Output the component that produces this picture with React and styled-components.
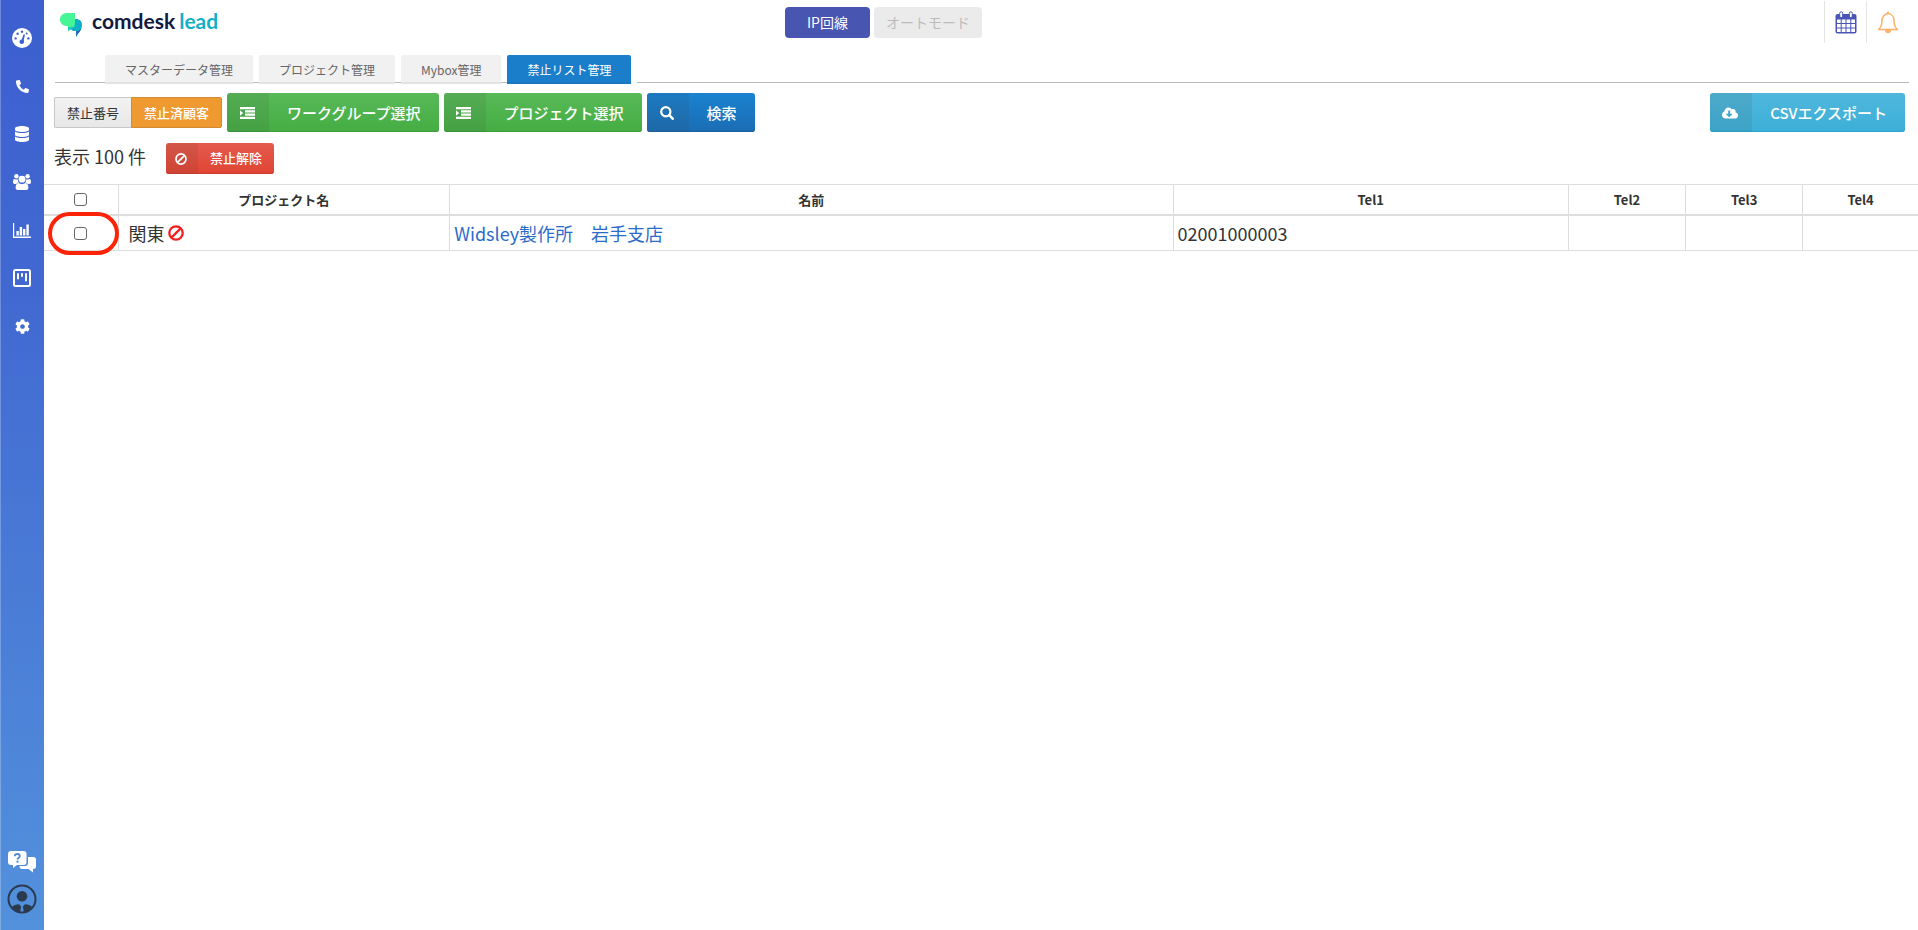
import React from 'react';
import styled, { createGlobalStyle, css } from 'styled-components';
import { FaDatabase, FaPhoneAlt, FaCog, FaCloudDownloadAlt } from 'react-icons/fa';

const GlobalStyle = createGlobalStyle`
  *, *::before, *::after { box-sizing: border-box; }
  body {
    margin: 0;
    background: #fff;
    color: #333;
    font-family: 'Noto Sans CJK JP', 'Noto Sans', sans-serif;
    font-size: 18px;
  }
  button { font-family: inherit; cursor: pointer; margin: 0; }
  svg { display: block; flex: none; }
`;

const Shell = styled.div`
  display: flex;
  min-height: 100vh;
`;

const Sidebar = styled.nav`
  flex: none;
  width: 44px;
  padding: 14px 0 16px;
  display: flex;
  flex-direction: column;
  justify-content: space-between;
  color: #fff;
  background: linear-gradient(#3d5fcf, #4168d1 30%, #5391dc);
  box-shadow: inset 1px 0 0 rgba(255, 255, 255, 0.25);
`;

const SideGroup = styled.div`
  display: flex;
  flex-direction: column;
  gap: ${(p) => p.$gap || 0}px;
`;

const SideLink = styled.a`
  height: ${(p) => (p.$small ? 30 : 48)}px;
  display: flex;
  align-items: center;
  justify-content: center;
  color: inherit;
`;

const Main = styled.div`
  flex: 1;
  min-width: 0;
`;

const Header = styled.header`
  height: 43px;
  display: flex;
  align-items: flex-start;
  padding-right: 10px;
`;

const LogoArea = styled.div`
  width: 39.75%;
  padding: 8px 0 0 16px;
`;

const Logo = styled.a`
  display: inline-flex;
  gap: 10px;
  text-decoration: none;
  font: 700 21px/25px Lato, sans-serif;
  color: #14193f;
`;

const LogoAccent = styled.span`
  color: #14b0c8;
  margin-left: 4px;
`;

const LogoMark = styled.svg`
  margin-top: 5px;
`;

const Modes = styled.div`
  display: flex;
  gap: 4px;
  padding-top: 7px;
`;

const ModeButton = styled.button`
  height: 31px;
  padding: 0 ${(p) => (p.$active ? 22 : 12)}px;
  border: 0;
  border-radius: 4px;
  font-size: 14px;
  line-height: 31px;
  color: ${(p) => (p.$active ? '#fff' : '#bcbcbc')};
  background: ${(p) => (p.$active ? '#4855b1' : '#ebebeb')};
`;

const HeaderIcons = styled.div`
  display: flex;
  margin: 1px 0 0 auto;
`;

const HeaderIcon = styled.button`
  width: 42px;
  height: 42px;
  padding: 0;
  display: flex;
  align-items: center;
  justify-content: center;
  background: none;
  border: 0;
  border-left: 1px solid #e4e4e4;
`;

const Tabs = styled.ul`
  list-style: none;
  margin: 12px 9px 0 11px;
  padding: 0 0 0 50px;
  height: 28px;
  display: flex;
  align-items: flex-start;
  border-bottom: 1px solid #b9b9b9;
`;

const TabItem = styled.li`
  height: 29px;
  padding-right: 6px;
  background: ${(p) => (p.$active ? '#fff' : 'none')};
`;

const TabLink = styled.a`
  display: block;
  height: 29px;
  padding: 0 20px;
  border-radius: 2px 2px 0 0;
  font-size: 12px;
  line-height: 29px;
  text-decoration: none;
  white-space: nowrap;
  color: ${(p) => (p.$active ? '#fff' : '#666')};
  background: ${(p) => (p.$active ? '#1a7ecb' : '#f1f1f1')};
  box-shadow: inset 0 -2px 0 ${(p) => (p.$active ? '#1a78c2' : '#e2e2e2')};
`;

const Toolbar = styled.div`
  display: flex;
  align-items: center;
  gap: 5px;
  padding: 10px 13px 0 10px;
`;

const Segmented = styled.div`
  display: flex;
`;

const Segment = styled.button`
  height: 31px;
  padding: 0 12px;
  border: 1px solid ${(p) => (p.$active ? '#cf8b35' : '#c8c8c8')};
  border-radius: ${(p) => (p.$active ? '0 2px 2px 0' : '2px 0 0 2px')};
  ${(p) => !p.$active && css`border-right: 0;`}
  font-size: 13px;
  line-height: 29px;
  font-weight: ${(p) => (p.$active ? 500 : 400)};
  color: ${(p) => (p.$active ? '#fff' : '#333')};
  background: ${(p) => (p.$active ? '#ee9a31' : 'linear-gradient(#f2f2f2, #e8e8e8)')};
`;

const tones = {
  green: ['#58b957', '#45ad43', '#3f9f3d'],
  blue: ['#1a82d0', '#1b6db3', '#1b62a3'],
  sky: ['#50b7dc', '#3cafd8', '#2aa5d0'],
  red: ['#e45b4c', '#e04433', '#d03b2b'],
};

const ActionButton = styled.button`
  display: flex;
  height: ${(p) => (p.$small ? 31 : 39)}px;
  padding: 0;
  border: 0;
  border-radius: 3px;
  overflow: hidden;
  white-space: nowrap;
  color: #fff;
  font-weight: 500;
  font-size: ${(p) => (p.$small ? 13 : 15)}px;
  line-height: ${(p) => (p.$small ? 30 : 39)}px;
  background: ${(p) => `linear-gradient(${tones[p.$tone][0]}, ${tones[p.$tone][1]})`};
  box-shadow: inset 0 -1px 0 ${(p) => tones[p.$tone][2]};
  margin-left: ${(p) => (p.$push ? 'auto' : 0)};
`;

const ActionIcon = styled.span`
  width: ${(p) => (p.$small ? 32 : 42)}px;
  padding-right: 2px;
  align-self: stretch;
  display: flex;
  align-items: center;
  justify-content: center;
  background: rgba(60, 60, 60, 0.1);
`;

const ActionLabel = styled.span`
  padding: 0 ${(p) => (p.$small ? 12 : 18)}px;
`;

const CountRow = styled.div`
  display: flex;
  align-items: flex-start;
  gap: 20px;
  padding: 11px 10px 10px;
`;

const Count = styled.p`
  margin: 0;
  line-height: 27px;
`;

const TableFrame = styled.div`
  border-top: 1px solid #ddd;
  border-bottom: 1px solid #ddd;
`;

const Table = styled.table`
  width: 100%;
  table-layout: fixed;
  border-collapse: collapse;
  border-style: hidden;
`;

const Col = styled.col`
  width: ${(p) => p.$width};
`;

const Th = styled.th`
  height: 30px;
  padding: 0;
  border: 1px solid #ddd;
  border-bottom-width: 2px;
  font-size: 13px;
  line-height: 20px;
  font-weight: 700;
`;

const Td = styled.td`
  height: 35px;
  padding: 0 4px 0 ${(p) => (p.$indent ? 10 : 4)}px;
  border: 1px solid #ddd;
  line-height: 26px;
`;

const CheckWrap = styled.label`
  position: relative;
  display: flex;
  align-items: center;
  justify-content: center;
`;

const Checkbox = styled.input`
  appearance: none;
  width: 13px;
  height: 13px;
  margin: 0;
  border: 1px solid #666;
  border-radius: 3px;
  background: #fff;
  &:checked { background: #1a7ecb; border-color: #1a7ecb; }
`;

const Highlight = styled.span`
  position: absolute;
  inset: -15px -5px -15px 0;
  border: 4px solid #fb2408;
  border-radius: 22px;
  pointer-events: none;
`;

const Project = styled.span`
  display: flex;
  align-items: center;
  gap: 3px;
`;

const NameLink = styled.a`
  color: #2b6cc9;
  text-decoration: none;
`;

const GaugeIcon = () => (
  <svg width="20" height="20" viewBox="0 0 20 20" aria-hidden="true">
    <circle cx="10" cy="10" r="10" fill="#fff" />
    <g fill="#3f61d0">
      <circle cx="3.6" cy="10.4" r="1.2" />
      <circle cx="5.6" cy="5.8" r="1.2" />
      <circle cx="10" cy="3.7" r="1.2" />
      <circle cx="14.7" cy="5.6" r="1" />
      <circle cx="16.4" cy="10.4" r="1.2" />
      <circle cx="9.8" cy="13.8" r="2.3" />
      <path d="M9 13.5 11.6 6.2l1.4.5-1.8 7.5z" />
    </g>
  </svg>
);

const UsersIcon = () => (
  <svg width="18" height="16" viewBox="0 0 18 16" fill="#fff" aria-hidden="true">
    <circle cx="3.4" cy="2.2" r="2.2" />
    <circle cx="14.6" cy="2.2" r="2.2" />
    <circle cx="9" cy="5.2" r="3.4" />
    <path d="M1.400 5c2 .9 3 .5 3.600.2-.2 1.400.2 2.600 1 3.500-1.300 0-2.100.5-2.700 1.200H1.700C.6 9.900 0 9.200 0 8.300 0 7 .2 5 1.400 5zM16.600 5c-2 .9-3 .5-3.600.2.2 1.400-.2 2.600-1 3.500 1.300 0 2.100.5 2.700 1.200h1.600c1.100 0 1.700-.7 1.700-1.600 0-1.300-.2-3.300-1.400-3.300z" />
    <path d="M5.600 9c2 1.500 4.800 1.500 6.800 0 2.100.3 3 2.400 3 4.800 0 1.400-1 2.200-2.200 2.200H4.800c-1.200 0-2.200-.8-2.200-2.200C2.600 11.400 3.500 9.300 5.600 9z" />
  </svg>
);

const ChartIcon = () => (
  <svg width="18" height="15" viewBox="0 0 18 15" fill="#fff" aria-hidden="true">
    <path d="M0 0h1.200v13.600H18V15H0zM3.400 8h2.400v4.600H3.400zM6.700 4h2.400v8.600H6.700zM10 6h2.400v6.600H10zM13.400 1.500h2.400v11.100h-2.400z" />
  </svg>
);

const BoardIcon = () => (
  <svg width="18" height="18" viewBox="0 0 18 18" aria-hidden="true">
    <rect x="1" y="1" width="16" height="16" rx="1.500" fill="none" stroke="#fff" strokeWidth="2" />
    <path d="M4 4.200h2v6H4zM8 4.200h2v3.600H8zM12 4.200h2v8h-2z" fill="#fff" />
  </svg>
);

const HelpChatIcon = () => (
  <svg width="28" height="22" viewBox="0 0 28 22" aria-hidden="true">
    <path d="M20 6h5.500C27 6 28 7 28 8.500v7c0 1.500-1 2.500-2.500 2.500H25v3.500L20.500 18H14c-1.500 0-2.500-1-2.500-2.500V15H17c2 0 3-1.500 3-3z" fill="#fff" />
    <path d="M3 0h12.500C17.500 0 18.500 1 18.500 3v8c0 2-1 3-3 3H9l-4 3v-3H3c-2 0-3-1-3-3V3c0-2 1-3 3-3z" fill="#fff" />
    <path d="M6.800 5.200C6.800 3.700 7.800 3 9.200 3s2.600.8 2.600 2.100c0 1.600-2.300 1.600-2.300 3.500" fill="none" stroke="#5089d9" strokeWidth="1.800" />
    <circle cx="9.500" cy="10.700" r="1.100" fill="#5089d9" />
  </svg>
);

const AccountIcon = () => (
  <svg width="30" height="30" viewBox="0 0 30 30" aria-hidden="true">
    <circle cx="15" cy="15" r="13.500" fill="none" stroke="#2b3a4e" strokeWidth="2" />
    <circle cx="15" cy="12.300" r="5.300" fill="#2b3a4e" />
    <path d="M4.500 23.500c2-2.500 4.500-3 7.500-3.200l2.200 2.200-1.200 6C9.500 28 6.500 26.500 4.500 23.500zM25.500 23.500c-2-2.500-4.500-3-7.500-3.200l-2.200 2.200 1.200 6c3.500-.5 6.500-2 8.500-5z" fill="#2b3a4e" />
  </svg>
);

const CalendarIcon = () => (
  <svg width="22" height="23" viewBox="0 0 22 23" aria-hidden="true">
    <rect x="0.500" y="3" width="21" height="19.500" rx="2" fill="#4855b5" />
    <path d="M2 8.500h3.700v3.400H2zM6.700 8.500h3.800v3.400H6.700zM11.500 8.500h3.800v3.400h-3.800zM16.300 8.500H20v3.400h-3.700zM2 12.900h3.700v3.600H2zM6.700 12.900h3.800v3.600H6.700zM11.500 12.900h3.800v3.600h-3.800zM16.300 12.900H20v3.600h-3.700zM2 17.500h3.700V21H2zM6.700 17.500h3.800V21H6.700zM11.500 17.500h3.800V21h-3.800zM16.300 17.500H20V21h-3.700z" fill="#fff" />
    <rect x="4.700" y="0.800" width="3" height="5.800" rx="1.500" fill="#fff" stroke="#4855b5" />
    <rect x="14.300" y="0.800" width="3" height="5.800" rx="1.500" fill="#fff" stroke="#4855b5" />
  </svg>
);

const BellIcon = () => (
  <svg width="22" height="23" viewBox="0 0 22 23" aria-hidden="true">
    <path d="M1.500 18.500C4 16.500 5 14 5 9.500 5 5.500 7.500 2.800 11 2.800s6 2.700 6 6.700c0 4.500 1 7 3.500 9z" fill="none" stroke="#fbb168" strokeWidth="1.500" strokeLinejoin="round" />
    <path d="M10 .8h2v2h-2zM7.800 19h6.400c-.2 2-1.400 3.300-3.200 3.300S8 21 7.800 19z" fill="#fbb168" />
  </svg>
);

const IndentIcon = () => (
  <svg width="15" height="12" viewBox="0 0 15 12" fill="#fff" aria-hidden="true">
    <path d="M0 0h15v2.200H0zM5 3.300h10v2.200H5zM5 6.600h10v2.200H5zM0 9.800h15V12H0zM0 3.200l3.200 2.800L0 8.800z" />
  </svg>
);

const SearchIcon = () => (
  <svg width="14" height="14" viewBox="0 0 14 14" fill="none" stroke="#fff" aria-hidden="true">
    <circle cx="5.800" cy="5.800" r="4.600" strokeWidth="2.200" />
    <path d="m9.200 9.200 3.500 3.500" strokeWidth="2.600" strokeLinecap="round" />
  </svg>
);

const BanIcon = ({ size = 16, color = '#f62020' }) => (
  <svg width={size} height={size} viewBox="0 0 16 16" fill="none" stroke={color} strokeWidth="2.300" aria-hidden="true">
    <circle cx="8" cy="8" r="6.700" />
    <path d="M3.400 12.600 12.600 3.400" />
  </svg>
);

const sideLinks = [
  ['ダッシュボード', <GaugeIcon />],
  ['電話', <FaPhoneAlt size={13} />],
  ['データ', <FaDatabase size={16} />],
  ['ユーザー', <UsersIcon />],
  ['レポート', <ChartIcon />],
  ['ボード', <BoardIcon />],
  ['設定', <FaCog size={15} />],
];

const tabs = ['マスターデータ管理', 'プロジェクト管理', 'Mybox管理', '禁止リスト管理'];
const columns = ['プロジェクト名', '名前', 'Tel1', 'Tel2', 'Tel3', 'Tel4'];
const widths = ['74px', '17.7%', '38.6%', '21.1%', '6.25%', '6.25%', 'auto'];

function Action({ icon, children, small, tone, push }) {
  return (
    <ActionButton type="button" $tone={tone} $small={small} $push={push}>
      <ActionIcon $small={small}>{icon}</ActionIcon>
      <ActionLabel $small={small}>{children}</ActionLabel>
    </ActionButton>
  );
}

export default function App() {
  return (
    <>
      <GlobalStyle />
      <Shell>
        <Sidebar>
          <SideGroup>
            {sideLinks.map(([label, icon]) => (
              <SideLink key={label} href="#" aria-label={label}>{icon}</SideLink>
            ))}
          </SideGroup>
          <SideGroup $gap={7}>
            <SideLink href="#" $small aria-label="ヘルプ"><HelpChatIcon /></SideLink>
            <SideLink href="#" $small aria-label="アカウント"><AccountIcon /></SideLink>
          </SideGroup>
        </Sidebar>
        <Main>
          <Header>
            <LogoArea>
              <Logo href="#">
                <LogoMark width="22" height="24" viewBox="0 0 22 24" aria-hidden="true">
                  <path d="M10 6h6c4 0 6 2.500 6 6 0 4-2 6.500-4 8.500l-2 3.500v-6h-3l-5-4z" fill="#0fb0c6" />
                  <path d="M16 18c2 0 4-.5 5.200-3-.7 3-2 4.500-3.200 5.500L16 24z" fill="#2468b8" />
                  <path d="M7 0h8v14H8v-1H7C3 13 0 10.500 0 6.500S3 0 7 0z" fill="#45f596" />
                  <path d="M8 18v-4h7V8c0 6-3 8-7 10z" fill="#1ad0b4" />
                </LogoMark>
                <span>comdesk<LogoAccent>lead</LogoAccent></span>
              </Logo>
            </LogoArea>
            <Modes>
              <ModeButton type="button" $active>IP回線</ModeButton>
              <ModeButton type="button" disabled>オートモード</ModeButton>
            </Modes>
            <HeaderIcons>
              <HeaderIcon type="button" aria-label="カレンダー"><CalendarIcon /></HeaderIcon>
              <HeaderIcon type="button" aria-label="通知"><BellIcon /></HeaderIcon>
            </HeaderIcons>
          </Header>
          <Tabs>
            {tabs.map((tab, i) => (
              <TabItem key={tab} $active={i === 3}>
                <TabLink href="#" $active={i === 3}>{tab}</TabLink>
              </TabItem>
            ))}
          </Tabs>
          <Toolbar>
            <Segmented>
              <Segment type="button">禁止番号</Segment>
              <Segment type="button" $active>禁止済顧客</Segment>
            </Segmented>
            <Action tone="green" icon={<IndentIcon />}>ワークグループ選択</Action>
            <Action tone="green" icon={<IndentIcon />}>プロジェクト選択</Action>
            <Action tone="blue" icon={<SearchIcon />}>検索</Action>
            <Action tone="sky" push icon={<FaCloudDownloadAlt size={16} />}>CSVエクスポート</Action>
          </Toolbar>
          <CountRow>
            <Count>表示 100 件</Count>
            <Action tone="red" small icon={<BanIcon size={12} color="#fff" />}>禁止解除</Action>
          </CountRow>
          <TableFrame>
            <Table>
              <colgroup>{widths.map((w, i) => <Col key={i} $width={w} />)}</colgroup>
              <thead>
                <tr>
                  <Th><CheckWrap><Checkbox type="checkbox" aria-label="すべて選択" /></CheckWrap></Th>
                  {columns.map((c) => <Th key={c}>{c}</Th>)}
                </tr>
              </thead>
              <tbody>
                <tr>
                  <Td>
                    <CheckWrap>
                      <Checkbox type="checkbox" aria-label="関東を選択" />
                      <Highlight />
                    </CheckWrap>
                  </Td>
                  <Td $indent><Project>関東<BanIcon /></Project></Td>
                  <Td><NameLink href="#">Widsley製作所　岩手支店</NameLink></Td>
                  <Td>02001000003</Td>
                  <Td />
                  <Td />
                  <Td />
                </tr>
              </tbody>
            </Table>
          </TableFrame>
        </Main>
      </Shell>
    </>
  );
}
